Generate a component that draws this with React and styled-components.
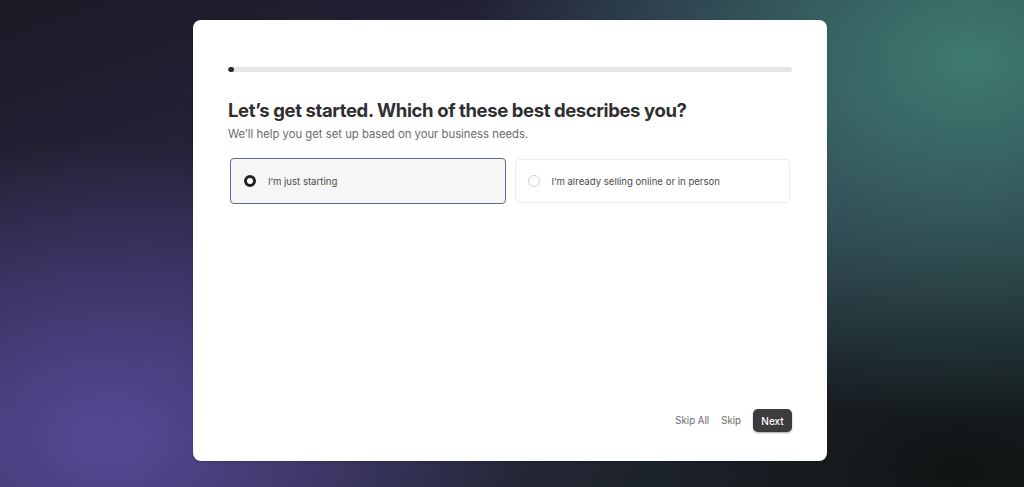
import React, { useState } from "react";
import styled, { createGlobalStyle } from "styled-components";

const Global = createGlobalStyle`
  html, body { margin: 0; padding: 0; }
  body {
    font-family: Inter, "Noto Sans", sans-serif;
    -webkit-font-smoothing: antialiased;
  }
`;

const Backdrop = styled.div`
  width: 1024px;
  height: 487px;
  box-sizing: border-box;
  padding: 20px 197px 26px 193px;
  display: flex;
  background:
    radial-gradient(ellipse 420px 300px at 110px 440px, rgba(86, 72, 150, 1) 0%, rgba(86, 72, 150, 0) 100%),
    radial-gradient(ellipse 500px 360px at 970px 60px, rgba(62, 122, 112, 1) 0%, rgba(62, 122, 112, 0) 100%),
    radial-gradient(ellipse 400px 250px at 960px 470px, rgba(16, 22, 22, 1) 0%, rgba(16, 22, 22, 0) 100%),
    linear-gradient(160deg, #1b1a26 0%, #2c2a48 50%, #1a2424 100%);
`;

const Card = styled.div`
  flex: 1;
  background: #ffffff;
  border-radius: 8px;
  padding: 47px 35px 29px 35px;
  display: flex;
  flex-direction: column;
  box-shadow: 0 1px 3px rgba(0,0,0,0.2);
`;

const Track = styled.div`
  height: 5px;
  border-radius: 3px;
  background: #e6e6e6;
  overflow: hidden;
`;

const Fill = styled.div`
  height: 100%;
  background: #2b2b2b;
  border-radius: 3px;
`;

const Title = styled.h1`
  margin: 26px 0 0 0;
  font-size: 18.5px;
  line-height: 24px;
  font-weight: 700;
  color: #2f2f2f;
  letter-spacing: -0.4px;
`;

const Subtitle = styled.p`
  margin: 5px 0 0 0;
  font-size: 11.3px;
  line-height: 15px;
  color: #6a6a6a;
`;

const Options = styled.div`
  margin-top: 16px;
  padding: 0 2px;
  display: grid;
  grid-template-columns: 1fr 1fr;
  gap: 9px;
`;

const Option = styled.button`
  display: flex;
  align-items: center;
  gap: 12px;
  height: ${(p) => (p.$selected ? "46px" : "44px")};
  margin-top: ${(p) => (p.$selected ? "0" : "1px")};
  box-sizing: border-box;
  padding: 0 ${(p) => (p.$selected ? "13px" : "12px")};
  border-radius: 4px;
  border: ${(p) => (p.$selected ? "1.5px solid #5b6a9c" : "1px solid #ececec")};
  background: ${(p) => (p.$selected ? "#f6f6f6" : "#ffffff")};
  font-family: inherit;
  font-size: 9.6px;
  color: #4a4a4a;
  text-align: left;
  cursor: pointer;
`;

const Radio = styled.span`
  width: 12px;
  height: 12px;
  box-sizing: border-box;
  border-radius: 50%;
  border: ${(p) => (p.$checked ? "3px solid #222" : "1px solid #cfcfcf")};
  background: #fff;
  flex: none;
`;

const Spacer = styled.div`
  flex: 1;
`;

const Actions = styled.div`
  display: flex;
  justify-content: flex-end;
  align-items: center;
  gap: 12px;
`;

const TextButton = styled.button`
  border: none;
  background: none;
  padding: 0;
  font-family: inherit;
  font-size: 9.7px;
  color: #6a6a6a;
  cursor: pointer;
`;

const PrimaryButton = styled.button`
  border: none;
  background: #3c3c3c;
  color: #fff;
  font-family: inherit;
  font-size: 10px;
  font-weight: 500;
  height: 23px;
  width: 39px;
  padding: 0;
  border-radius: 5px;
  box-shadow: 0 1px 2px rgba(0,0,0,0.35);
  cursor: pointer;
`;

const options = ["I’m just starting", "I’m already selling online or in person"];

export default function App() {
  const [sel, setSel] = useState(0);
  return (
    <>
      <Global />
      <Backdrop>
        <Card>
          <Track>
            <Fill style={{ width: "6px" }} />
          </Track>
          <Title>Let’s get started. Which of these best describes you?</Title>
          <Subtitle>We’ll help you get set up based on your business needs.</Subtitle>
          <Options>
            {options.map((o, i) => (
              <Option key={o} $selected={sel === i} onClick={() => setSel(i)}>
                <Radio $checked={sel === i} />
                {o}
              </Option>
            ))}
          </Options>
          <Spacer />
          <Actions>
            <TextButton>Skip All</TextButton>
            <TextButton>Skip</TextButton>
            <PrimaryButton>Next</PrimaryButton>
          </Actions>
        </Card>
      </Backdrop>
    </>
  );
}
